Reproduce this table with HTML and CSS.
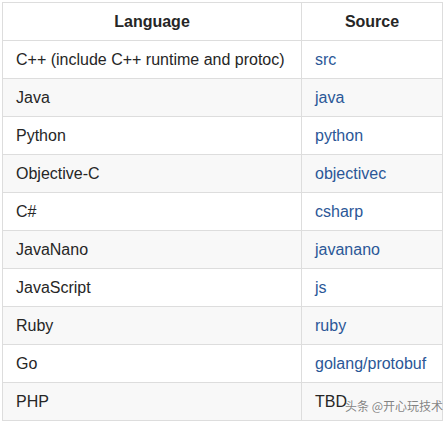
FILE: index.html
```html
<!DOCTYPE html>
<html>
<head>
<meta charset="utf-8">
<link rel="stylesheet" href="styles.css">
</head>
<body>
<div class="wrap">
<table class="langs">
  <thead>
    <tr><th class="c1">Language</th><th class="c2">Source</th></tr>
  </thead>
  <tbody>
    <tr><td>C++ (include C++ runtime and protoc)</td><td><a href="#">src</a></td></tr>
    <tr><td>Java</td><td><a href="#">java</a></td></tr>
    <tr><td>Python</td><td><a href="#">python</a></td></tr>
    <tr><td>Objective-C</td><td><a href="#">objectivec</a></td></tr>
    <tr><td>C#</td><td><a href="#">csharp</a></td></tr>
    <tr><td>JavaNano</td><td><a href="#">javanano</a></td></tr>
    <tr><td>JavaScript</td><td><a href="#">js</a></td></tr>
    <tr><td>Ruby</td><td><a href="#">ruby</a></td></tr>
    <tr><td>Go</td><td><a href="#">golang/protobuf</a></td></tr>
    <tr><td>PHP</td><td>TBD</td></tr>
  </tbody>
</table>
<div class="watermark">头条 @开心玩技术</div>
</div>
</body>
</html>
```
FILE: styles.css
```css
html, body {
  margin: 0;
  padding: 0;
  background: #fff;
}
.wrap {
  position: relative;
  padding: 2px 0 0 2px;
  width: 447px;
  height: 423px;
  box-sizing: border-box;
}
.langs {
  border-collapse: collapse;
  font-family: "Liberation Sans", Arial, sans-serif;
  font-size: 16px;
  color: #262626;
}
.langs th, .langs td {
  border: 1px solid #ddd;
  height: 38px;
  padding: 0 13px;
  box-sizing: border-box;
  text-align: left;
  line-height: 20px;
}
.langs th {
  font-weight: bold;
  text-align: center;
  height: 38px;
}
.langs .c1 { width: 299px; }
.langs .c2 { width: 141px; }
.langs tbody tr:nth-child(even) td {
  background: #f8f8f8;
}
.langs a {
  color: #2b5797;
  text-decoration: none;
}
.watermark {
  position: absolute;
  left: 345px;
  top: 399px;
  font-family: "Noto Sans CJK SC", sans-serif;
  font-size: 12px;
  line-height: 14px;
  color: rgba(110, 110, 110, 0.85);
  white-space: nowrap;
}
```
